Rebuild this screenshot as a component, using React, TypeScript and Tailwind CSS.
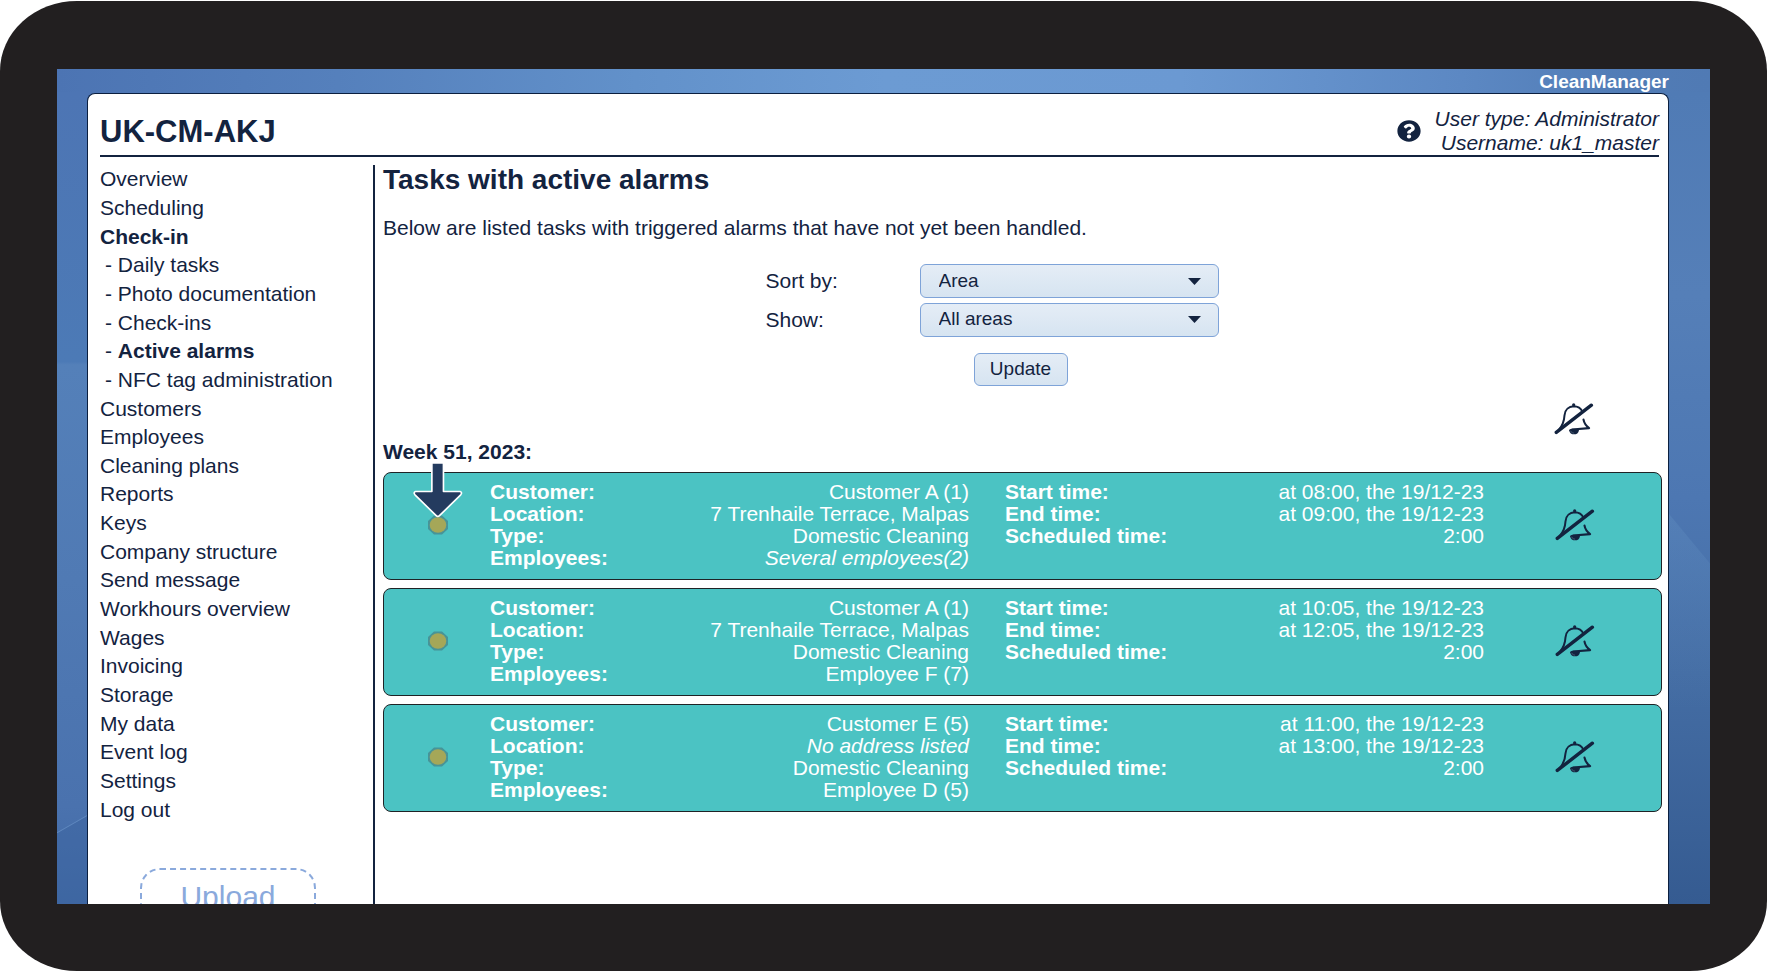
import React from "react";
import { FaQuestionCircle } from "react-icons/fa";

type NavItem = { label: string; sub?: boolean; active?: boolean };

const NAV: NavItem[] = [
  { label: "Overview" },
  { label: "Scheduling" },
  { label: "Check-in", active: true },
  { label: "Daily tasks", sub: true },
  { label: "Photo documentation", sub: true },
  { label: "Check-ins", sub: true },
  { label: "Active alarms", sub: true, active: true },
  { label: "NFC tag administration", sub: true },
  { label: "Customers" },
  { label: "Employees" },
  { label: "Cleaning plans" },
  { label: "Reports" },
  { label: "Keys" },
  { label: "Company structure" },
  { label: "Send message" },
  { label: "Workhours overview" },
  { label: "Wages" },
  { label: "Invoicing" },
  { label: "Storage" },
  { label: "My data" },
  { label: "Event log" },
  { label: "Settings" },
  { label: "Log out" },
];

type Field = { label: string; value: string; italic?: boolean };
type Task = { details: Field[]; times: Field[] };

const TASKS: Task[] = [
  {
    details: [
      { label: "Customer:", value: "Customer A (1)" },
      { label: "Location:", value: "7 Trenhaile Terrace, Malpas" },
      { label: "Type:", value: "Domestic Cleaning" },
      { label: "Employees:", value: "Several employees(2)", italic: true },
    ],
    times: [
      { label: "Start time:", value: "at 08:00, the 19/12-23" },
      { label: "End time:", value: "at 09:00, the 19/12-23" },
      { label: "Scheduled time:", value: "2:00" },
    ],
  },
  {
    details: [
      { label: "Customer:", value: "Customer A (1)" },
      { label: "Location:", value: "7 Trenhaile Terrace, Malpas" },
      { label: "Type:", value: "Domestic Cleaning" },
      { label: "Employees:", value: "Employee F (7)" },
    ],
    times: [
      { label: "Start time:", value: "at 10:05, the 19/12-23" },
      { label: "End time:", value: "at 12:05, the 19/12-23" },
      { label: "Scheduled time:", value: "2:00" },
    ],
  },
  {
    details: [
      { label: "Customer:", value: "Customer E (5)" },
      { label: "Location:", value: "No address listed", italic: true },
      { label: "Type:", value: "Domestic Cleaning" },
      { label: "Employees:", value: "Employee D (5)" },
    ],
    times: [
      { label: "Start time:", value: "at 11:00, the 19/12-23" },
      { label: "End time:", value: "at 13:00, the 19/12-23" },
      { label: "Scheduled time:", value: "2:00" },
    ],
  },
];

function Backdrop() {
  return (
    <svg
      className="absolute inset-0 h-full w-full"
      viewBox="0 0 1653 834"
      preserveAspectRatio="none"
      aria-hidden="true"
    >
      <defs>
        <linearGradient id="topGlow" x1="0" x2="1" y1="0" y2="0">
          <stop offset="0" stopColor="#4c74b3" />
          <stop offset="0.17" stopColor="#5580bc" />
          <stop offset="0.35" stopColor="#6291ca" />
          <stop offset="0.5" stopColor="#6c9bd3" />
          <stop offset="0.68" stopColor="#6b99d2" />
          <stop offset="0.85" stopColor="#5c88c3" />
          <stop offset="0.95" stopColor="#517cb6" />
          <stop offset="1" stopColor="#507ab4" />
        </linearGradient>
        <linearGradient id="leftSide" x1="0" x2="0" y1="0" y2="1">
          <stop offset="0" stopColor="#4d75b4" />
          <stop offset="0.332" stopColor="#4c7ab6" />
          <stop offset="0.336" stopColor="#5480b9" />
          <stop offset="0.6" stopColor="#507ab4" />
          <stop offset="0.88" stopColor="#4a72ae" />
          <stop offset="1" stopColor="#4069a4" />
        </linearGradient>
        <linearGradient id="rightSide" x1="0" x2="0" y1="0" y2="1">
          <stop offset="0" stopColor="#507bb5" />
          <stop offset="0.25" stopColor="#557fb8" />
          <stop offset="0.5" stopColor="#4d77b2" />
          <stop offset="0.7" stopColor="#456ea5" />
          <stop offset="1" stopColor="#355b91" />
        </linearGradient>
        <linearGradient id="sweep" x1="0" x2="0" y1="0" y2="1">
          <stop offset="0" stopColor="#6a98c8" stopOpacity="0.28" />
          <stop offset="1" stopColor="#6a98c8" stopOpacity="0" />
        </linearGradient>
      </defs>
      <rect width="1653" height="834" fill="url(#topGlow)" />
      <rect y="23" width="40" height="811" fill="url(#leftSide)" />
      <rect x="1600" y="23" width="53" height="811" fill="url(#rightSide)" />
      <path d="M0 763 L40 740 V834 H0 Z" fill="#3c649f" opacity="0.5" />
      <path d="M0 763 L40 740" stroke="#6f98cc" strokeWidth="1" opacity="0.6" />
      <path d="M1600 430 L1653 494 V640 H1600 Z" fill="url(#sweep)" />
    </svg>
  );
}

function BellOff() {
  return (
    <svg
      className="h-[34px] w-10"
      viewBox="218 64 122 102"
      fill="none"
      stroke="#13233f"
      strokeLinecap="round"
      strokeLinejoin="round"
      aria-hidden="true"
    >
      <path
        d="M232 149 C246 134 249 122 250 104 C251 86 264 77 278 76 C290 76 300 82 305 93"
        strokeWidth="6"
      />
      <circle cx="278" cy="72" r="5" fill="#13233f" stroke="none" />
      <path d="M308 117 C310 128 316 136 325 143 L274 147" strokeWidth="6.500" />
      <path d="M264 149 C264 143 293 143 294 149 C293 166 266 166 264 149 Z" fill="#13233f" stroke="none" />
      <path d="M269 152 C271 156 274 158 278 158" stroke="#6d8599" strokeWidth="1.6" />
      <path d="M225 156 L332 73" strokeWidth="10.500" />
    </svg>
  );
}

function StatusDot() {
  return (
    <svg className="h-5 w-[22px]" viewBox="0 0 22 20" role="img" aria-label="Alarm status">
      <path d="M7 0.500 H15 L21 6 V14 L15 19.500 H7 L1 14 V6 Z" fill="#479498" />
      <ellipse cx="11" cy="10" rx="8.300" ry="7.800" fill="#a5a758" />
    </svg>
  );
}

function PointerArrow() {
  return (
    <svg
      className="absolute -top-3 left-7 h-[57px] w-[51px]"
      viewBox="125 242 154 172"
      aria-hidden="true"
    >
      <path
        d="M185 248 H220 V334 H270 Q278 337 272 344 L208 407 Q203 412 198 407 L134 344 Q128 337 136 334 H185 Z"
        fill="#243b5f"
        stroke="#fff"
        strokeWidth="5"
        strokeLinejoin="round"
      />
    </svg>
  );
}

function FieldList({ items, className }: { items: Field[]; className: string }) {
  return (
    <dl className={className}>
      {items.map((f) => (
        <div key={f.label} className="flex justify-between whitespace-nowrap">
          <dt className="font-bold">{f.label}</dt>
          <dd className={f.italic ? "italic" : ""}>{f.value}</dd>
        </div>
      ))}
    </dl>
  );
}

function TaskCard({ task, pointed }: { task: Task; pointed: boolean }) {
  return (
    <li className="relative grid grid-cols-[106px_1fr_1fr_177px] rounded-lg border border-[#1f2326] bg-[#4bc3c3] pt-2 pb-[10px] leading-[22px] text-white">
      <div className="flex items-center justify-center pl-[2px]">
        <StatusDot />
      </div>
      <FieldList items={task.details} className="pr-[18px]" />
      <FieldList items={task.times} className="pl-[18px]" />
      <div className="flex items-center justify-center pl-1">
        <button type="button" aria-label="Mute alarm">
          <BellOff />
        </button>
      </div>
      {pointed && <PointerArrow />}
    </li>
  );
}

function SelectRow({ id, label, options }: { id: string; label: string; options: string[] }) {
  return (
    <div className="flex items-center">
      <label htmlFor={id} className="w-[154px]">
        {label}
      </label>
      <div className="relative">
        <select
          id={id}
          className="h-[34px] w-[299px] appearance-none rounded-md border border-[#7ea3d8] bg-linear-to-b from-[#e5edf6] to-[#d6e4f1] pr-10 pl-[18px] text-[19px] text-[#13233f]"
        >
          {options.map((o) => (
            <option key={o}>{o}</option>
          ))}
        </select>
        <svg
          className="pointer-events-none absolute top-[14px] right-[18px] h-[7px] w-[13px]"
          viewBox="0 0 13 7"
          aria-hidden="true"
        >
          <path d="M0 0 H13 L6.500 7 Z" fill="#13233f" />
        </svg>
      </div>
    </div>
  );
}

export default function App() {
  return (
    <div className="h-screen bg-white pt-px font-['Liberation_Sans',Arial,sans-serif] text-[21px] text-[#13233f]">
      <div className="h-full rounded-[77px/70px] bg-[#221f20] px-[57px] pt-[68px] pb-[67px]">
        <div className="relative h-full overflow-hidden">
          <Backdrop />
          <div className="relative flex h-full flex-col pr-[41px] pl-[30px]">
            <div className="h-6 shrink-0 text-right text-[19px] leading-[26px] font-bold text-white">
              CleanManager
            </div>
            <div className="flex min-h-0 flex-1 flex-col overflow-hidden rounded-t-lg border border-b-0 border-[#0b1f3f] bg-white pl-3">
              <header className="mr-[9px] flex h-[63px] shrink-0 items-end justify-between border-b-2 border-[#13233f]">
                <h1 className="text-[31px] leading-[46px] font-bold">UK-CM-AKJ</h1>
                <div className="flex items-center gap-[14px]">
                  <button type="button" aria-label="Help">
                    <FaQuestionCircle className="h-[22px] w-6" preserveAspectRatio="none" />
                  </button>
                  <div className="text-right leading-6 italic">
                    <div>User type: Administrator</div>
                    <div>Username: uk1_master</div>
                  </div>
                </div>
              </header>

              <div className="flex min-h-0 flex-1 pt-2">
                <aside className="w-[275px] shrink-0 border-r-2 border-[#13233f]">
                  <nav>
                    <ul className="grid h-[659px] auto-rows-fr items-center leading-7">
                      {NAV.map((n) => (
                        <li key={n.label} className={n.sub ? "pl-[5px]" : ""}>
                          {n.sub && "- "}
                          <a href="#" className={n.active ? "font-bold" : ""}>
                            {n.label}
                          </a>
                        </li>
                      ))}
                    </ul>
                  </nav>
                  <button
                    type="button"
                    className="mt-11 ml-10 block h-24 w-44 rounded-[20px] border-2 border-dashed border-[#8aa9dc] pb-10 text-[30px] text-[#8aa9dc]"
                  >
                    Upload
                  </button>
                </aside>

                <main className="min-w-0 flex-1 pr-[6px] pl-2">
                  <h2 className="text-[28px] leading-[30px] font-bold">Tasks with active alarms</h2>
                  <p className="mt-[21px] leading-6">
                    Below are listed tasks with triggered alarms that have not yet been handled.
                  </p>

                  <form
                    className="mx-auto mt-6 flex w-[514px] flex-col gap-1"
                    onSubmit={(e) => e.preventDefault()}
                  >
                    <SelectRow id="sort" label="Sort by:" options={["Area", "Customer", "Employee"]} />
                    <SelectRow id="show" label="Show:" options={["All areas"]} />
                    <div className="flex justify-center pt-3 pr-1">
                      <button
                        type="submit"
                        className="h-[33px] w-[94px] rounded-md border border-[#7ea3d8] bg-linear-to-b from-[#e5edf6] to-[#d6e4f1] text-[19px]"
                      >
                        Update
                      </button>
                    </div>
                  </form>

                  <div className="mt-4 flex justify-end">
                    <div className="flex w-[177px] justify-center">
                      <button type="button" aria-label="Mute all alarms">
                        <BellOff />
                      </button>
                    </div>
                  </div>
                  <h3 className="mt-1 leading-6 font-bold">Week 51, 2023:</h3>
                  <ul className="mt-2 flex flex-col gap-2">
                    {TASKS.map((t, i) => (
                      <TaskCard key={i} task={t} pointed={i === 0} />
                    ))}
                  </ul>
                </main>
              </div>
            </div>
          </div>
        </div>
      </div>
    </div>
  );
}
